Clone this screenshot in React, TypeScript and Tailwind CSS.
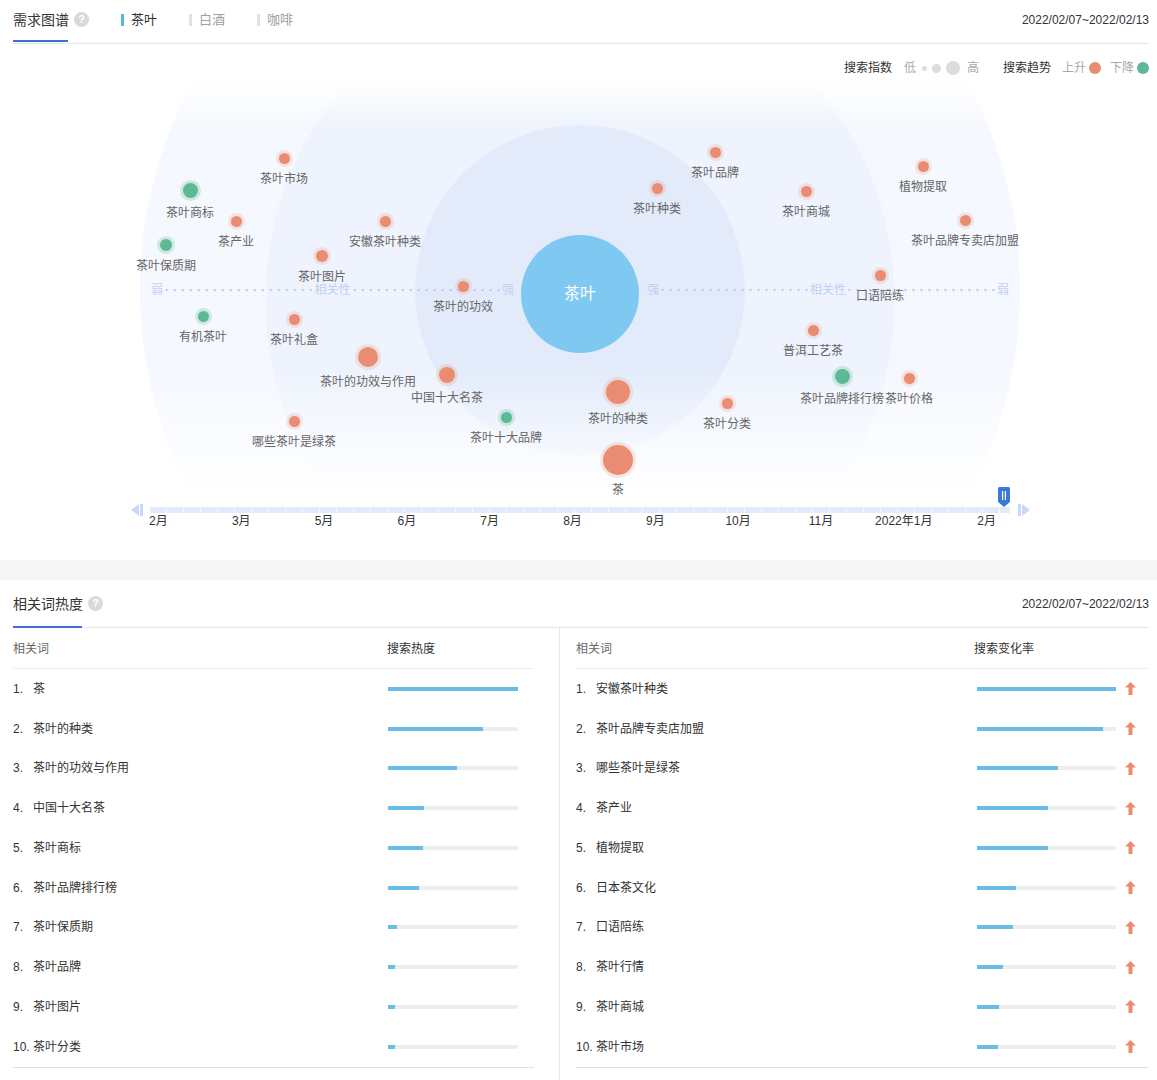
type GraphNode = { label: string; x: number; y: number; d: number; up: boolean };

// keyword bubbles, x/y are the centre of the dot inside the graph canvas
const nodes: GraphNode[] = [
  { label: "茶叶市场", x: 284, y: 78, d: 11, up: true },
  { label: "茶叶商标", x: 190, y: 110, d: 15, up: false },
  { label: "茶产业", x: 236, y: 141, d: 11, up: true },
  { label: "安徽茶叶种类", x: 385, y: 141, d: 11, up: true },
  { label: "茶叶保质期", x: 166, y: 165, d: 12, up: false },
  { label: "茶叶图片", x: 322, y: 176, d: 12, up: true },
  { label: "茶叶的功效", x: 463, y: 206, d: 11, up: true },
  { label: "有机茶叶", x: 203, y: 236, d: 11, up: false },
  { label: "茶叶礼盒", x: 294, y: 239, d: 11, up: true },
  { label: "茶叶的功效与作用", x: 368, y: 277, d: 20, up: true },
  { label: "中国十大名茶", x: 447, y: 295, d: 16, up: true },
  { label: "茶叶十大品牌", x: 506, y: 337, d: 11, up: false },
  { label: "哪些茶叶是绿茶", x: 294, y: 341, d: 11, up: true },
  { label: "茶叶的种类", x: 618, y: 312, d: 24, up: true },
  { label: "茶", x: 618, y: 380, d: 30, up: true },
  { label: "茶叶分类", x: 727, y: 323, d: 11, up: true },
  { label: "茶叶品牌", x: 715, y: 72, d: 11, up: true },
  { label: "茶叶种类", x: 657, y: 108, d: 11, up: true },
  { label: "茶叶商城", x: 806, y: 111, d: 11, up: true },
  { label: "植物提取", x: 923, y: 86, d: 11, up: true },
  { label: "茶叶品牌专卖店加盟", x: 965, y: 140, d: 11, up: true },
  { label: "口语陪练", x: 880, y: 195, d: 11, up: true },
  { label: "普洱工艺茶", x: 813, y: 250, d: 11, up: true },
  { label: "茶叶品牌排行榜", x: 842, y: 296, d: 15, up: false },
  { label: "茶叶价格", x: 909, y: 298, d: 11, up: true },
];

const months = ["2月", "3月", "5月", "6月", "7月", "8月", "9月", "10月", "11月", "2022年1月", "2月"];

const heatRows: [string, number][] = [
  ["茶", 100],
  ["茶叶的种类", 73],
  ["茶叶的功效与作用", 53],
  ["中国十大名茶", 28],
  ["茶叶商标", 27],
  ["茶叶品牌排行榜", 24],
  ["茶叶保质期", 7],
  ["茶叶品牌", 5],
  ["茶叶图片", 5],
  ["茶叶分类", 5],
];

const changeRows: [string, number][] = [
  ["安徽茶叶种类", 100],
  ["茶叶品牌专卖店加盟", 91],
  ["哪些茶叶是绿茶", 58],
  ["茶产业", 51],
  ["植物提取", 51],
  ["日本茶文化", 28],
  ["口语陪练", 26],
  ["茶叶行情", 19],
  ["茶叶商城", 16],
  ["茶叶市场", 15],
];

const Help = () => (
  <span className="ml-[5px] inline-flex h-[15px] w-[15px] items-center justify-center rounded-full bg-[#d9d9d9] text-[11px] font-bold leading-none text-white">
    ?
  </span>
);

const UpArrow = () => (
  <svg width="11" height="13" viewBox="0 0 11 13">
    <path d="M5.5 0 L11 5.5 H7.5 V13 H3.5 V5.5 H0 Z" fill="#ec8b6e" />
  </svg>
);

const Dots = () => (
  <div className="h-[4px] flex-1 bg-[radial-gradient(circle,#b7c6ee_1px,transparent_1.4px)] bg-[length:8px_4px] bg-center" />
);

const Bubble = ({ node }: { node: GraphNode }) => (
  <div className="absolute" style={{ left: node.x, top: node.y }}>
    <div
      className={
        node.up
          ? "absolute rounded-full bg-[#ea8c71] ring-[3px] ring-[#ea8c71]/20"
          : "absolute rounded-full bg-[#5db995] ring-[3px] ring-[#5db995]/25"
      }
      style={{ width: node.d, height: node.d, left: -node.d / 2, top: -node.d / 2 }}
    />
    <div
      className="absolute -translate-x-1/2 whitespace-nowrap text-[12px] leading-4 text-[#666]"
      style={{ top: node.d / 2 + 7 }}
    >
      {node.label}
    </div>
  </div>
);

const Graph = () => (
  <div className="relative h-[420px]">
    {/* concentric relevance zones */}
    <div className="absolute inset-x-0 top-0 h-[415px] overflow-hidden">
      <div className="absolute left-[140px] top-[-230px] h-[880px] w-[880px] rounded-full bg-[#f5f8fe]" />
      <div className="absolute left-[266px] top-[-100px] h-[640px] w-[628px] rounded-full bg-[#eef3fd]" />
      <div className="absolute left-[415px] top-[45px] h-[330px] w-[330px] rounded-full bg-[#e3ebfb]" />
      <div className="absolute inset-x-0 top-0 h-[50px] bg-gradient-to-b from-white to-white/0" />
      <div className="absolute inset-x-0 top-[290px] h-[125px] bg-gradient-to-b from-white/0 to-white" />
    </div>

    {/* relevance axis */}
    <div className="absolute left-[151px] top-[202px] flex w-[363px] items-center text-[12px] leading-4 text-[#c2cff2]">
      <span>弱</span>
      <Dots />
      <span>相关性</span>
      <Dots />
      <span>强</span>
    </div>
    <div className="absolute left-[647px] top-[202px] flex w-[362px] items-center text-[12px] leading-4 text-[#c2cff2]">
      <span>强</span>
      <Dots />
      <span>相关性</span>
      <Dots />
      <span>弱</span>
    </div>

    <div className="absolute left-[521px] top-[155px] flex h-[118px] w-[118px] items-center justify-center rounded-full bg-[#7fc8f1] text-[16px] text-white">
      茶叶
    </div>

    {nodes.map((n) => (
      <Bubble key={n.label} node={n} />
    ))}
  </div>
);

const Timeline = () => (
  <div className="relative h-[60px]">
    <div className="flex items-center pl-[131px] pt-[4px]">
      <svg width="12" height="12" viewBox="0 0 12 12">
        <path d="M0 6 L8 0 V12 Z" fill="#c9d8f6" />
        <rect x="9" y="0" width="3" height="12" fill="#c9d8f6" />
      </svg>
      <div className="ml-[7px] h-[6px] w-[860px] bg-[repeating-linear-gradient(90deg,#e3ebfb_0_16px,#f4f7fe_16px_17px)]" />
      <svg className="ml-[8px]" width="12" height="12" viewBox="0 0 12 12">
        <rect x="0" y="0" width="3" height="12" fill="#c9d8f6" />
        <path d="M4 0 L12 6 L4 12 Z" fill="#c9d8f6" />
      </svg>
    </div>
    <div className="ml-[117px] mt-[-3px] grid w-[911px] grid-cols-11 text-center text-[12px] leading-4 text-[#333]">
      {months.map((m, i) => (
        <span key={i}>{m}</span>
      ))}
    </div>
    <svg className="absolute left-[998px] top-[-13px]" width="12" height="20" viewBox="0 0 12 20">
      <path d="M1.5 0 H10.5 Q12 0 12 1.5 V15 L6 20 L0 15 V1.5 Q0 0 1.5 0 Z" fill="#3b78d8" />
      <rect x="4" y="4" width="1.2" height="9" fill="#fff" />
      <rect x="6.8" y="4" width="1.2" height="9" fill="#fff" />
    </svg>
  </div>
);

const Bar = ({ pct, width }: { pct: number; width: number }) => (
  <div className="h-[4px] bg-[#eeeeee]" style={{ width }}>
    <div className="h-full bg-[#68bde6]" style={{ width: `${pct}%` }} />
  </div>
);

export default function App() {
  return (
    <div className="w-[1157px] bg-white font-[family-name:Liberation_Sans,Noto_Sans_CJK_SC,sans-serif] text-[#333]">
      {/* 需求图谱 */}
      <div className="pl-[13px] pr-[8px]">
        <div className="flex h-[44px] items-center border-b border-[#e6e6e6] pb-[4px]">
          <div className="relative flex items-center">
            <span className="text-[14px] leading-5">需求图谱</span>
            <Help />
            <div className="absolute left-0 top-[30px] h-[2px] w-[55px] bg-[#3e6fd4]" />
          </div>
          <div className="ml-[32px] flex items-center text-[13px] leading-5">
            <span className="mr-[7px] h-[12px] w-[3px] bg-[#5ab4e6]" />
            <span>茶叶</span>
          </div>
          <div className="ml-[32px] flex items-center text-[13px] leading-5 text-[#a0a0a0]">
            <span className="mr-[7px] h-[12px] w-[3px] bg-[#e0e0e0]" />
            <span>白酒</span>
          </div>
          <div className="ml-[32px] flex items-center text-[13px] leading-5 text-[#a0a0a0]">
            <span className="mr-[7px] h-[12px] w-[3px] bg-[#e0e0e0]" />
            <span>咖啡</span>
          </div>
          <span className="ml-auto text-[12px] leading-5">2022/02/07~2022/02/13</span>
        </div>
        <div className="flex h-[36px] items-center justify-end pt-[12px] text-[12px] leading-4">
          <span>搜索指数</span>
          <span className="ml-[12px] text-[#aaa]">低</span>
          <span className="ml-[6px] h-[5px] w-[5px] rounded-full bg-[#dcdcdc]" />
          <span className="ml-[5px] h-[9px] w-[9px] rounded-full bg-[#dcdcdc]" />
          <span className="ml-[5px] h-[14px] w-[14px] rounded-full bg-[#dcdcdc]" />
          <span className="ml-[7px] text-[#aaa]">高</span>
          <span className="ml-[24px]">搜索趋势</span>
          <span className="ml-[11px] text-[#aaa]">上升</span>
          <span className="ml-[3px] h-[12px] w-[12px] rounded-full bg-[#ea8c71]" />
          <span className="ml-[9px] text-[#aaa]">下降</span>
          <span className="ml-[3px] h-[12px] w-[12px] rounded-full bg-[#5db995]" />
        </div>
      </div>

      <Graph />
      <Timeline />

      <div className="h-[20px] bg-[#f6f6f6]" />

      {/* 相关词热度 */}
      <div className="pl-[13px] pr-[8px]">
        <div className="flex h-[48px] items-center border-b border-[#e6e6e6]">
          <div className="relative flex items-center">
            <span className="text-[14px] leading-5">相关词热度</span>
            <Help />
            <div className="absolute left-0 top-[32px] h-[2px] w-[69px] bg-[#3e6fd4]" />
          </div>
          <span className="ml-auto text-[12px] leading-5">2022/02/07~2022/02/13</span>
        </div>
      </div>

      <div className="flex text-[12px] leading-4">
        <div className="w-[560px] border-r border-[#e8e8e8] pb-[12px] pl-[13px] pr-[25px] pt-[1px]">
          <div className="flex h-[40px] items-center border-b border-[#ececec]">
            <span className="w-[374px] text-[#666]">相关词</span>
            <span>搜索热度</span>
          </div>
          {heatRows.map(([name, pct], i) => (
            <div key={name} className="flex h-[39.75px] items-center">
              <span className="w-[20px]">{i + 1}.</span>
              <span className="w-[355px]">{name}</span>
              <Bar pct={pct} width={130} />
            </div>
          ))}
          <div className="border-b border-[#e0e0e0]" />
        </div>

        <div className="flex-1 pb-[12px] pl-[16px] pr-[9px] pt-[1px]">
          <div className="flex h-[40px] items-center border-b border-[#ececec]">
            <span className="w-[398px] text-[#666]">相关词</span>
            <span>搜索变化率</span>
          </div>
          {changeRows.map(([name, pct], i) => (
            <div key={name} className="flex h-[39.75px] items-center">
              <span className="w-[20px]">{i + 1}.</span>
              <span className="w-[381px]">{name}</span>
              <Bar pct={pct} width={139} />
              <span className="ml-[9px] flex">
                <UpArrow />
              </span>
            </div>
          ))}
          <div className="border-b border-[#e0e0e0]" />
        </div>
      </div>
    </div>
  );
}
